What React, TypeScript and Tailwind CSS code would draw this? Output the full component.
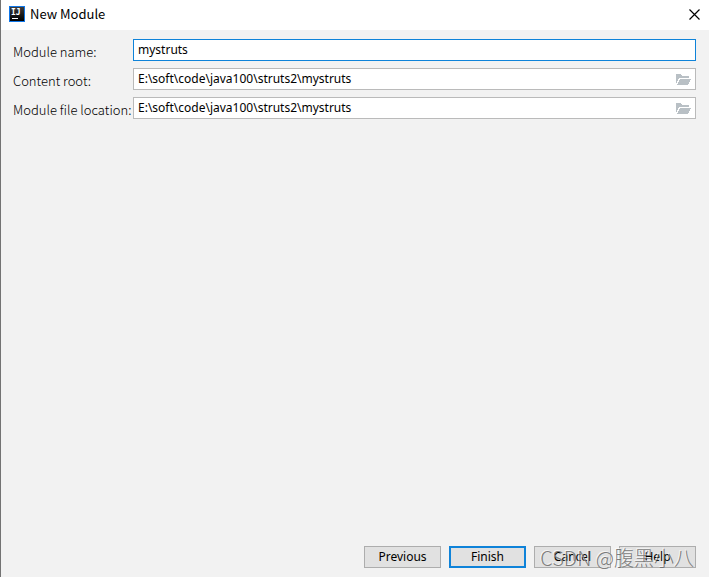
import { useState } from "react";

interface PathFieldProps {
  id: string;
  label: string;
  value: string;
  onChange: (value: string) => void;
}

const labelClass =
  "pt-[5px] text-[13px] leading-4 font-light whitespace-nowrap text-black font-['Noto_Sans_CJK_SC',sans-serif]";

const inputClass =
  "min-w-0 flex-1 bg-transparent px-1 text-[12px] leading-5 text-black outline-none font-['Noto_Sans',sans-serif]";

const buttonClass =
  "h-[22px] w-[77px] bg-[#e1e1e1] text-[12px] leading-4 text-black font-['Noto_Sans',sans-serif]";

const IdeaLogo = () => (
  <svg width="16" height="16" viewBox="0 0 16 16" aria-hidden="true">
    <defs>
      <linearGradient id="idea-face" x1="0" y1="0" x2="0" y2="1">
        <stop offset="0" stopColor="#3a3a3a" />
        <stop offset="1" stopColor="#000000" />
      </linearGradient>
    </defs>
    <rect width="16" height="16" fill="#0f76e8" />
    <rect x="1" y="1" width="14" height="14" fill="url(#idea-face)" />
    <text
      x="2"
      y="9"
      fill="#ffffff"
      fontSize="8"
      fontWeight="700"
      fontFamily="'DejaVu Sans Mono', monospace"
    >
      IJ
    </text>
    <rect x="3" y="12" width="6" height="1" fill="#ffffff" />
  </svg>
);

const FolderIcon = () => (
  <svg
    width="15"
    height="11"
    viewBox="0 0 15 11"
    fill="#b9c0c5"
    shapeRendering="crispEdges"
    aria-hidden="true"
  >
    <path d="M0 0h5l1 2h7v2H3L0 10z" />
    <path d="M4 5h11l-3 6H1z" />
  </svg>
);

const PathField = ({ id, label, value, onChange }: PathFieldProps) => (
  <>
    <label htmlFor={id} className={labelClass}>
      {label}
    </label>
    <div className="flex h-[22px] border border-[#bababa] bg-white">
      <input
        id={id}
        type="text"
        value={value}
        onChange={(e) => onChange(e.target.value)}
        className={inputClass}
      />
      <button
        type="button"
        aria-label={`Browse ${label}`}
        className="flex items-center px-1"
      >
        <FolderIcon />
      </button>
    </div>
  </>
);

export default function App() {
  const [name, setName] = useState("mystruts");
  const [contentRoot, setContentRoot] = useState(
    "E:\\soft\\code\\java100\\struts2\\mystruts"
  );
  const [fileLocation, setFileLocation] = useState(
    "E:\\soft\\code\\java100\\struts2\\mystruts"
  );

  return (
    <div className="flex min-h-screen flex-col border-l border-[#737373] bg-[#f2f2f2]">
      {/* --- Title bar --- */}
      <header className="flex h-[30px] items-center bg-white px-2 pb-0.5">
        <IdeaLogo />
        <h1 className="ml-[5px] flex-1 text-[13px] leading-4 text-black font-['Noto_Sans_CJK_SC',sans-serif]">
          New Module
        </h1>
        <button type="button" aria-label="Close" className="p-px">
          <svg
            width="11"
            height="11"
            viewBox="0 0 11 11"
            stroke="#000000"
            strokeWidth="1.2"
            aria-hidden="true"
          >
            <path d="M0.5 0.5l10 10M10.5 0.5l-10 10" />
          </svg>
        </button>
      </header>

      <form
        className="flex flex-1 flex-col pt-[9px] pr-[13px] pb-[9px] pl-3"
        onSubmit={(e) => e.preventDefault()}
      >
        {/* --- Fields --- */}
        <div className="grid grid-cols-[120px_1fr] gap-y-[7px]">
          <label htmlFor="module-name" className={labelClass}>
            Module name:
          </label>
          <div className="flex h-[22px] border border-[#0f83d9] bg-white">
            <input
              id="module-name"
              type="text"
              value={name}
              onChange={(e) => setName(e.target.value)}
              className={inputClass}
            />
          </div>
          <PathField
            id="content-root"
            label="Content root:"
            value={contentRoot}
            onChange={setContentRoot}
          />
          <PathField
            id="file-location"
            label="Module file location:"
            value={fileLocation}
            onChange={setFileLocation}
          />
        </div>

        {/* --- Buttons --- */}
        <div className="relative mt-auto flex justify-end gap-2">
          <button
            type="button"
            className={`${buttonClass} border border-[#adadad]`}
          >
            Previous
          </button>
          <button
            type="submit"
            className={`${buttonClass} border-2 border-[#0f83d9]`}
          >
            Finish
          </button>
          <button
            type="button"
            className={`${buttonClass} border border-[#adadad]`}
          >
            Cancel
          </button>
          <button
            type="button"
            className={`${buttonClass} border border-[#adadad]`}
          >
            Help
          </button>
          <span className="pointer-events-none absolute top-0 right-0.5 text-[20px] leading-6 font-light whitespace-nowrap text-[#606060]/80 [text-shadow:-1px_-1px_0_#ffffffb0] font-['Noto_Sans_CJK_SC',sans-serif]">
            CSDN @腹黑小八
          </span>
        </div>
      </form>
    </div>
  );
}
